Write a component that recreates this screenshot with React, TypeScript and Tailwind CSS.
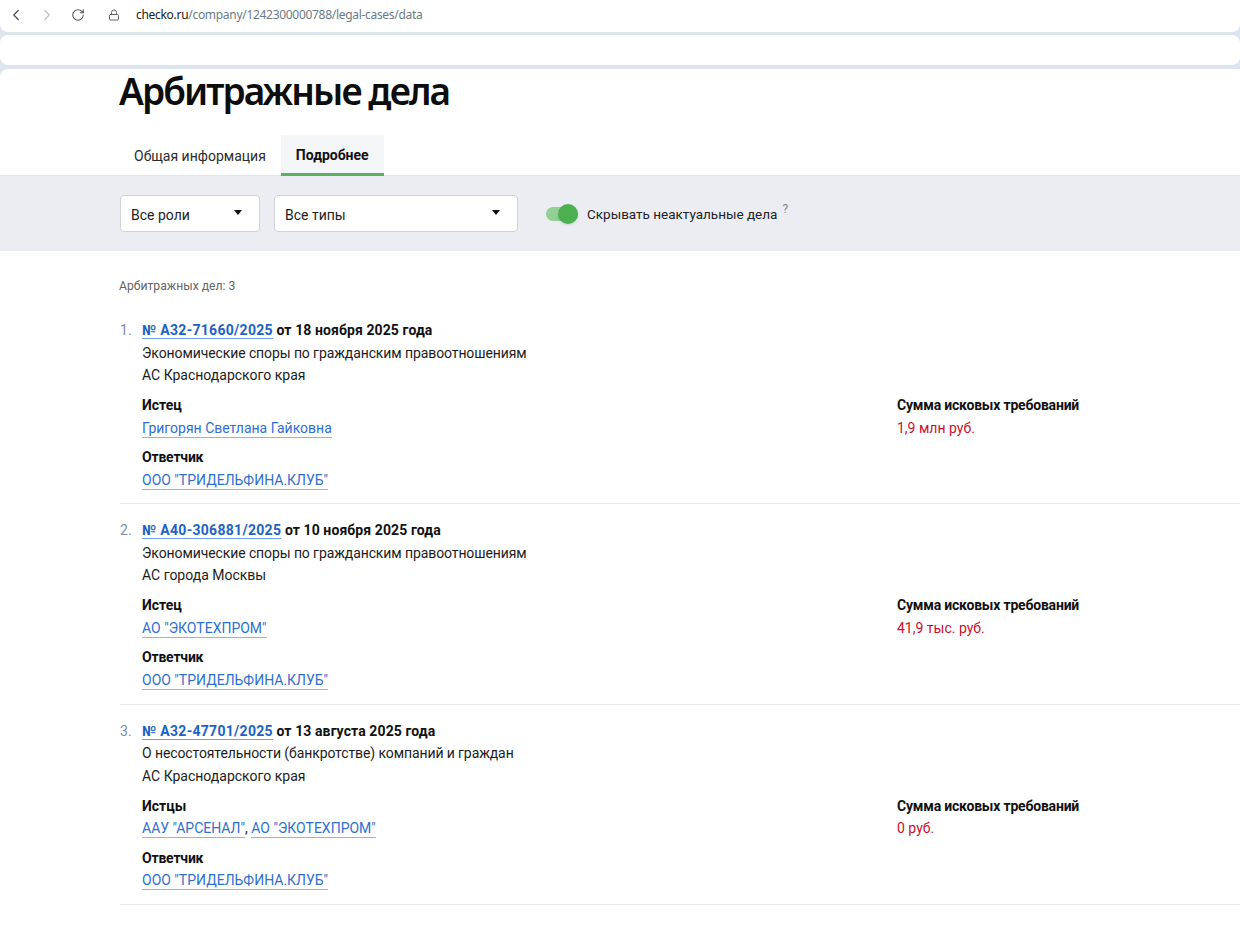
import { ChevronLeft, ChevronRight, RotateCw, Lock } from "lucide-react"

type CaseItem = {
    num: string
    date: string
    kind: string
    court: string
    plaintiffLabel: string
    plaintiffs: string[]
    sum: string
}

const cases: CaseItem[] = [
    {
        num: "№ А32-71660/2025",
        date: "от 18 ноября 2025 года",
        kind: "Экономические споры по гражданским правоотношениям",
        court: "АС Краснодарского края",
        plaintiffLabel: "Истец",
        plaintiffs: ["Григорян Светлана Гайковна"],
        sum: "1,9 млн руб.",
    },
    {
        num: "№ А40-306881/2025",
        date: "от 10 ноября 2025 года",
        kind: "Экономические споры по гражданским правоотношениям",
        court: "АС города Москвы",
        plaintiffLabel: "Истец",
        plaintiffs: ['АО "ЭКОТЕХПРОМ"'],
        sum: "41,9 тыс. руб.",
    },
    {
        num: "№ А32-47701/2025",
        date: "от 13 августа 2025 года",
        kind: "О несостоятельности (банкротстве) компаний и граждан",
        court: "АС Краснодарского края",
        plaintiffLabel: "Истцы",
        plaintiffs: ['ААУ "АРСЕНАЛ"', 'АО "ЭКОТЕХПРОМ"'],
        sum: "0 руб.",
    },
]

function PartyLink({ name }: { name: string }) {
    return <a className="text-[#2f6fce] border-b border-[#8fb4ea] pb-px">{name}</a>
}

function Select({ label, width }: { label: string; width: string }) {
    return (
        <div className={`${width} h-[37px] mb-[1px] bg-white border border-[#cfd3da] rounded flex items-center justify-between pl-[10px] pr-[17px] text-[14px] text-[#222]`}>
            <span className="pt-[5px]">{label}</span>
            <span className="w-0 h-0 border-x-[4.5px] border-x-transparent border-t-[5px] border-t-[#111] mb-[2px]" />
        </div>
    )
}

function CaseRow({ item, index }: { item: CaseItem; index: number }) {
    return (
        <div className="flex border-b border-[#e8e9eb] pt-[15px] h-[200.3px]">
            <div className="w-[22px] text-[#7d8ca6] text-[14px] leading-[22px]">{index + 1}.</div>
            <div className="flex-1 text-[14px] leading-[22.5px] text-[#1c1c1c]">
                <div className="font-bold text-[#111] tracking-[0.1px]">
                    <a className="text-[#1d63c4] border-b border-[#6f9fe6] tracking-[0.3px]">{item.num}</a> {item.date}
                </div>
                <div className="tracking-[-0.1px]">{item.kind}</div>
                <div>{item.court}</div>
                <div className="flex mt-[7.5px]">
                    <div className="w-[755px]">
                        <div className="font-bold text-[#111]">{item.plaintiffLabel}</div>
                        <div>
                            {item.plaintiffs.map((name, i) => (
                                <span key={name}>
                                    {i > 0 && ", "}
                                    <PartyLink name={name} />
                                </span>
                            ))}
                        </div>
                        <div className="font-bold text-[#111] mt-[7px] tracking-[-0.2px]">Ответчик</div>
                        <div>
                            <PartyLink name='ООО "ТРИДЕЛЬФИНА.КЛУБ"' />
                        </div>
                    </div>
                    <div>
                        <div className="font-bold text-[#111] tracking-[-0.2px]">Сумма исковых требований</div>
                        <div className="text-[#c8102e]">{item.sum}</div>
                    </div>
                </div>
            </div>
        </div>
    )
}

export default function App() {
    return (
        <div className="font-['Roboto','Liberation_Sans',sans-serif] w-[1240px] h-[935px] overflow-hidden bg-[#dde6ee]">
            {/* browser bars */}
            <div className="h-[32px] pb-[2px] bg-white rounded-b-lg flex items-center text-[#555]">
                <ChevronLeft className="w-[18px] h-[18px] ml-[7px]" strokeWidth={1.8} />
                <ChevronRight className="w-[18px] h-[18px] ml-[13px] text-[#c4c4c4]" strokeWidth={1.8} />
                <RotateCw className="w-[14px] h-[14px] ml-[15px]" strokeWidth={1.8} />
                <Lock className="w-[12px] h-[12px] ml-[23px]" strokeWidth={1.8} />
                <div className="ml-[16px] text-[12px] text-[#6b7a85] font-['Noto_Sans',sans-serif] tracking-[-0.3px]">
                    <span className="text-[#222]">checko.ru</span>/company/1242300000788/legal-cases/data
                </div>
            </div>
            <div className="h-[30px] mt-[3px] bg-white rounded-lg" />

            {/* page */}
            <div className="mt-[4px] h-[866px] bg-white rounded-tl-lg">
                <div className="pl-[119px]">
                    <h1 className="font-['Noto_Sans',sans-serif] text-[37px] font-semibold leading-[44px] text-[#0d0d0d] tracking-[-1.9px]">Арбитражные дела</h1>
                    <div className="flex mt-[22px] h-[41px] -mb-px relative text-[14px]">
                        <div className="px-[15px] pt-[1px] flex items-center text-[#2b2b2b]">Общая информация</div>
                        <div className="px-[15px] pt-[3px] flex items-center font-bold text-[#111] bg-[#f4f5f7] border-b-[3px] border-[#5cb060]">Подробнее</div>
                    </div>
                </div>

                {/* filters */}
                <div className="h-[76px] bg-[#ebedf2] border-t border-[#e2e4ea] pl-[120px] flex items-center gap-[14px]">
                    <Select label="Все роли" width="w-[140px]" />
                    <Select label="Все типы" width="w-[244px]" />
                    <div className="ml-[14px] relative w-[32px] h-[14px] bg-[#93d096] rounded-full">
                        <span className="absolute right-0 top-[-3px] w-[20px] h-[20px] bg-[#4caf50] rounded-full shadow" />
                    </div>
                    <div className="-ml-[5px] text-[13.5px] text-[#222] pt-[1px]">
                        Скрывать неактуальные дела
                        <sup className="ml-[5px] text-[12px] text-[#888]">?</sup>
                    </div>
                </div>

                {/* list */}
                <div className="pl-[120px]">
                    <div className="text-[12.2px] text-[#666] -ml-px mt-[26px] mb-[9px] leading-[18px]">Арбитражных дел: 3</div>
                    {cases.map((item, i) => (
                        <CaseRow key={item.num} item={item} index={i} />
                    ))}
                </div>
            </div>
        </div>
    )
}
